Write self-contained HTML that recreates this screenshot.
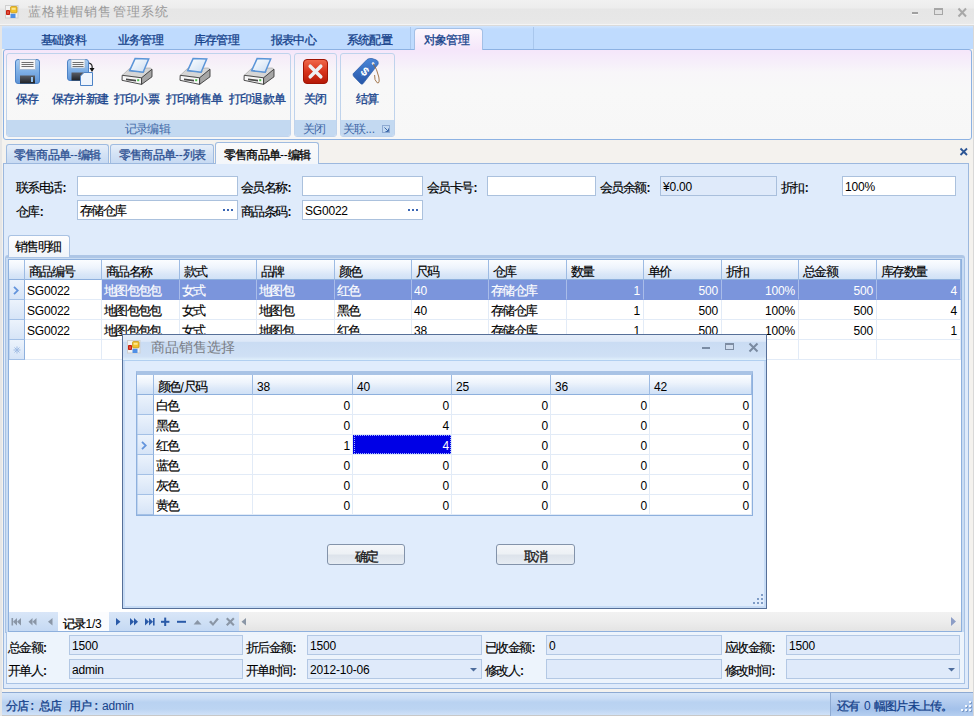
<!DOCTYPE html>
<html><head><meta charset="utf-8">
<style>
*{margin:0;padding:0;box-sizing:border-box}
html,body{width:974px;height:716px;overflow:hidden;background:#f4f2ee}
body{font-family:"Liberation Sans",sans-serif;font-size:13px;letter-spacing:-1.7px;-webkit-text-stroke:0.15px currentColor;color:#000;position:relative}
.a{position:absolute}
.tt{position:absolute;white-space:nowrap;line-height:16px}
.L{font-size:12px;letter-spacing:-0.2px;-webkit-text-stroke:0}
.inp{position:absolute;height:20px;background:#fff;border:1px solid #abc1dd;line-height:16px;padding:2px 0 0 2px;white-space:nowrap}
.ro{background:#dfeafa;border-color:#a9bfdc}
.ro2{background:#dfeafa;border-color:#b3c8e4}
.gh{position:absolute;top:0;height:20px;background:linear-gradient(#fbfdff,#eef4fc 40%,#dae7f8 75%,#d0e1f6);border-right:1px solid #9dbbe3;border-bottom:1px solid #8eb0dd;line-height:16px;padding:4px 0 0 4px;white-space:nowrap}
.gc{position:absolute;height:20px;border-right:1px solid #e2ebf7;border-bottom:1px solid #e2ebf7;line-height:16px;padding:3px 3px 0 2px;white-space:nowrap;overflow:hidden}
.r{text-align:right}
.dr{padding-right:2px}
.rh{position:absolute;height:20px;background:linear-gradient(#ecf3fc,#d6e4f7);border-right:1px solid #8eb0dd;border-bottom:1px solid #a3c0e6;box-shadow:inset 1px 0 0 #c0d5f0}
.sel{background:#7b95dc;color:#fff;border-right-color:#a9bce9;border-bottom-color:#7b95dc}
.fsel{background:#0000e6;color:#fff}
.btn{position:absolute;height:21px;border:1px solid #8393aa;border-radius:3px;background:linear-gradient(#f4f6f9,#edf1f5 45%,#dde3eb 55%,#e6ecf3);text-align:center;line-height:16px;padding-top:3.5px;color:#1b1b1b;-webkit-text-stroke:0.35px #1b1b1b}
.dtab{position:absolute;top:144px;height:20px;border:1px solid #9fbbe0;border-bottom:none;border-radius:3px 3px 0 0;background:linear-gradient(#e6eef9,#d3e2f5 50%,#c6d9f2);color:#2b4f91}
.grp{position:absolute;top:53px;height:84px;border:1px solid #bfd3ec;border-radius:3px;background:linear-gradient(#f5eaf8,#f8f6f9 22%,#f8f8f8 40%,#f7f7f7)}
.glab{position:absolute;left:0;right:0;bottom:0;height:16px;background:#c3d9f1;border-radius:0 0 2px 2px}
</style></head><body>
<div class="a" style="left:0;top:0;width:974px;height:25px;background:linear-gradient(#f1f1f1,#ededed 8px,#e6e6e6 9px,#e7e7e7 20px,#e9e9e9);border-bottom:1px solid #f4f4f4"></div>
<svg class="a" style="left:5px;top:5px" width="14" height="14" viewBox="0 0 14 14">
 <rect x="0.5" y="0.5" width="12.5" height="12.5" fill="#f2f2f2" stroke="#cfcfcf"/>
 <rect x="5.6" y="1.6" width="6.4" height="6.2" rx="0.8" fill="#f3c22a" stroke="#c39312" stroke-width="0.8"/>
 <rect x="6.6" y="2.8" width="4" height="2" fill="#fff0a8" opacity="0.8"/>
 <rect x="1" y="5" width="4" height="5" rx="0.8" fill="#c8200e"/>
 <rect x="2.5" y="6.3" width="1" height="2.5" fill="#ff9a8a" opacity="0.8"/>
 <rect x="5.5" y="8.8" width="5" height="4.2" fill="#4f8fe6"/>
</svg>
<div class="tt" style="left:28px;top:4px;font-size:13px;letter-spacing:1.1px;color:#9a9a9a;-webkit-text-stroke:0">蓝格鞋帽销售管理系统</div>
<div class="a" style="left:912px;top:12px;width:6px;height:2px;background:#a0a0a0;box-shadow:0 1px 0 #f6f6f6"></div>
<div class="a" style="left:934px;top:8px;width:9px;height:7px;border:1px solid #a6a6a6;border-top-width:2px;background:#e2e2e2"></div>
<svg class="a" style="left:957px;top:7px" width="11" height="11"><path d="M1.5 1.5 L9 9.5 M9 1.5 L1.5 9.5" stroke="#a8a8a8" stroke-width="2"/></svg>
<div class="a" style="left:0;top:25px;width:974px;height:24px;background:linear-gradient(#d2e5fd,#bfdbfe 3px);border-top:1px solid #dadada"></div>
<div class="a" style="left:0;top:26px;width:2px;height:690px;background:#e6e6e6"></div>
<div class="a" style="left:973px;top:26px;width:1px;height:690px;background:#d8d8d8"></div>
<div class="tt" style="left:41px;top:32px;color:#15428b;font-size:12px;letter-spacing:-0.8px;-webkit-text-stroke:0.3px currentColor;">基础资料</div>
<div class="tt" style="left:118px;top:32px;color:#15428b;font-size:12px;letter-spacing:-0.8px;-webkit-text-stroke:0.3px currentColor;">业务管理</div>
<div class="tt" style="left:194px;top:32px;color:#15428b;font-size:12px;letter-spacing:-0.8px;-webkit-text-stroke:0.3px currentColor;">库存管理</div>
<div class="tt" style="left:271px;top:32px;color:#15428b;font-size:12px;letter-spacing:-0.8px;-webkit-text-stroke:0.3px currentColor;">报表中心</div>
<div class="tt" style="left:347px;top:32px;color:#15428b;font-size:12px;letter-spacing:-0.8px;-webkit-text-stroke:0.3px currentColor;">系统配置</div>
<div class="a" style="left:410px;top:27px;width:1px;height:22px;background:#a9c7ed"></div>
<div class="a" style="left:533px;top:27px;width:1px;height:22px;background:#a9c7ed"></div>
<div class="a" style="left:3px;top:49px;width:969px;height:91px;border:1px solid #8db2e3;border-radius:3px;background:linear-gradient(#f5e6fa,#f6effa 15%,#f8f6f9 25%,#f8f8f8 45%,#f7f7f7)"></div>
<div class="a" style="left:414px;top:28px;width:69px;height:22px;border:1px solid #a4c0e6;border-bottom:none;border-radius:4px 4px 0 0;background:linear-gradient(#fcf7fd,#f5e6fa)"></div>
<div class="tt" style="left:424px;top:32px;color:#15428b;font-size:12px;letter-spacing:-0.8px;-webkit-text-stroke:0.3px currentColor;">对象管理</div>
<div class="grp" style="left:6px;width:285px"><div class="glab"></div></div>
<div class="tt" style="left:125px;top:121px;color:#3d67a6;font-size:12px;letter-spacing:-0.8px;-webkit-text-stroke:0.3px currentColor;-webkit-text-stroke:0">记录编辑</div>
<div class="grp" style="left:294px;width:43px"><div class="glab"></div></div>
<div class="tt" style="left:303px;top:121px;color:#3d67a6;font-size:12px;letter-spacing:-0.8px;-webkit-text-stroke:0.3px currentColor;-webkit-text-stroke:0">关闭</div>
<div class="grp" style="left:340px;width:55px"><div class="glab"></div></div>
<div class="tt" style="left:343px;top:121px;color:#3d67a6;font-size:12px;letter-spacing:-0.8px;-webkit-text-stroke:0.3px currentColor;-webkit-text-stroke:0">关联<span class="L">...</span></div>
<svg class="a" style="left:382px;top:125px" width="9" height="9"><rect x="0.5" y="0.5" width="7" height="7" fill="none" stroke="#8eaad2"/><path d="M2.5 2.5 L6 6 M6.5 3.5 L6.5 6.5 L3.5 6.5" stroke="#3e6aaa" fill="none"/></svg>
<svg class="a" style="left:0;top:0" width="0" height="0"><defs>
  <linearGradient id="fb" x1="0" y1="0" x2="0" y2="1"><stop offset="0" stop-color="#a9cdf3"/><stop offset="0.5" stop-color="#7fb0e6"/><stop offset="1" stop-color="#5d93d6"/></linearGradient>
  <linearGradient id="fs" x1="0" y1="0" x2="0" y2="1"><stop offset="0" stop-color="#5a5e66"/><stop offset="1" stop-color="#1e2126"/></linearGradient>
  <linearGradient id="pp" x1="0" y1="0" x2="1" y2="1"><stop offset="0" stop-color="#ffffff"/><stop offset="1" stop-color="#c9dcf2"/></linearGradient>
  <linearGradient id="rx" x1="0" y1="0" x2="0" y2="1"><stop offset="0" stop-color="#f06a4c"/><stop offset="0.5" stop-color="#d8341c"/><stop offset="1" stop-color="#b41806"/></linearGradient>
  <linearGradient id="tg" x1="0" y1="0" x2="0" y2="1"><stop offset="0" stop-color="#4a86d8"/><stop offset="1" stop-color="#2656a8"/></linearGradient>
</defs></svg>
<svg class="a" style="left:14px;top:58px" width="28" height="28" viewBox="0 0 28 28">
 <rect x="1.5" y="1.5" width="24" height="24" rx="2.5" fill="url(#fb)" stroke="#4d83c6"/>
 <rect x="5.5" y="1.5" width="16" height="10" fill="#f6f6f6" stroke="#9fb6d2" stroke-width="0.8"/>
 <rect x="7.5" y="4" width="12" height="1" fill="#707070"/><rect x="7.5" y="6" width="12" height="1" fill="#707070"/><rect x="7.5" y="8" width="12" height="1" fill="#707070"/>
 <rect x="6" y="17.5" width="15" height="8" fill="url(#fs)"/>
 <rect x="17" y="19" width="2" height="5" fill="#8ec0f0"/>
</svg>
<svg class="a" style="left:66px;top:58px" width="30" height="30" viewBox="0 0 30 30">
 <rect x="1.5" y="1.5" width="21" height="21" rx="2.5" fill="url(#fb)" stroke="#4d83c6"/>
 <rect x="5" y="1.5" width="14" height="8.5" fill="#f6f6f6" stroke="#9fb6d2" stroke-width="0.8"/>
 <rect x="6.5" y="4" width="11" height="1" fill="#707070"/><rect x="6.5" y="6" width="11" height="1" fill="#707070"/><rect x="6.5" y="8" width="11" height="1" fill="#707070"/>
 <rect x="5.5" y="14.5" width="13" height="8" fill="url(#fs)"/>
 <path d="M18 14.5 L26.5 14.5 L26.5 27.5 L14.5 27.5 L14.5 18Z" fill="#eef4fc" stroke="#4d83c6"/>
 <path d="M23 5 Q27 6 26 11" fill="none" stroke="#222" stroke-width="1.2"/>
 <path d="M23.5 10 L28.5 10 L26 14Z" fill="#111"/>
</svg>
<svg class="a" style="left:120px;top:57px" width="34" height="30" viewBox="0 0 34 30">
 <path d="M2.3 18.3 L9.6 11.4 L30.2 11 L32 12.2 L21.6 20.8Z" fill="#d6d6d6" stroke="#9a9a9a" stroke-width="0.6"/>
 <path d="M2.2 18.3 L21.6 20.8 L21.6 27.4 L2 23.3Z" fill="#f6f6f6" stroke="#3a3a3a" stroke-width="0.9"/>
 <path d="M21.6 20.8 L32 12.2 L32 19.8 L21.6 27.4Z" fill="#a6a6a6" stroke="#3a3a3a" stroke-width="0.9"/>
 <path d="M9 14 L23.5 15.5 L24.5 14 L10 12.6Z" fill="#555"/>
 <path d="M9.6 13.6 L15.1 1.6 L28.7 2 L23.1 15.2Z" fill="url(#pp)" stroke="#5b95d8" stroke-width="1.5"/>
 <path d="M6 21.5 L16 22.8 L16 24.6 L6 23.2Z" fill="#4a4a4a"/>
 <rect x="17.2" y="22.2" width="2" height="2" fill="#52c152"/>
</svg>
<svg class="a" style="left:178px;top:57px" width="34" height="30" viewBox="0 0 34 30">
 <path d="M2.3 18.3 L9.6 11.4 L30.2 11 L32 12.2 L21.6 20.8Z" fill="#d6d6d6" stroke="#9a9a9a" stroke-width="0.6"/>
 <path d="M2.2 18.3 L21.6 20.8 L21.6 27.4 L2 23.3Z" fill="#f6f6f6" stroke="#3a3a3a" stroke-width="0.9"/>
 <path d="M21.6 20.8 L32 12.2 L32 19.8 L21.6 27.4Z" fill="#a6a6a6" stroke="#3a3a3a" stroke-width="0.9"/>
 <path d="M9 14 L23.5 15.5 L24.5 14 L10 12.6Z" fill="#555"/>
 <path d="M9.6 13.6 L15.1 1.6 L28.7 2 L23.1 15.2Z" fill="url(#pp)" stroke="#5b95d8" stroke-width="1.5"/>
 <path d="M6 21.5 L16 22.8 L16 24.6 L6 23.2Z" fill="#4a4a4a"/>
 <rect x="17.2" y="22.2" width="2" height="2" fill="#52c152"/>
</svg>
<svg class="a" style="left:242px;top:57px" width="34" height="30" viewBox="0 0 34 30">
 <path d="M2.3 18.3 L9.6 11.4 L30.2 11 L32 12.2 L21.6 20.8Z" fill="#d6d6d6" stroke="#9a9a9a" stroke-width="0.6"/>
 <path d="M2.2 18.3 L21.6 20.8 L21.6 27.4 L2 23.3Z" fill="#f6f6f6" stroke="#3a3a3a" stroke-width="0.9"/>
 <path d="M21.6 20.8 L32 12.2 L32 19.8 L21.6 27.4Z" fill="#a6a6a6" stroke="#3a3a3a" stroke-width="0.9"/>
 <path d="M9 14 L23.5 15.5 L24.5 14 L10 12.6Z" fill="#555"/>
 <path d="M9.6 13.6 L15.1 1.6 L28.7 2 L23.1 15.2Z" fill="url(#pp)" stroke="#5b95d8" stroke-width="1.5"/>
 <path d="M6 21.5 L16 22.8 L16 24.6 L6 23.2Z" fill="#4a4a4a"/>
 <rect x="17.2" y="22.2" width="2" height="2" fill="#52c152"/>
</svg>
<svg class="a" style="left:302px;top:58px" width="28" height="28" viewBox="0 0 28 28">
 <rect x="1.5" y="1.5" width="24" height="24" rx="3.5" fill="url(#rx)" stroke="#a01404"/>
 <path d="M8.2 8.2 L18.8 18.8 M18.8 8.2 L8.2 18.8" stroke="#eef1f4" stroke-width="3.5" stroke-linecap="round"/>
</svg>
<svg class="a" style="left:350px;top:56px" width="34" height="32" viewBox="0 0 34 32">
 <path d="M3.3 17.6 L17.1 3.5 Q19 2 22 2.5 L26.5 4 Q28.8 5.5 28.2 8 L13.1 27.6 Q12 28.8 10.5 27.5 L3.8 20.5 Q2.5 19 3.3 17.6Z" fill="url(#tg)" stroke="#2a5aa6" stroke-width="0.7"/>
 <circle cx="23.1" cy="7.5" r="1.3" fill="#fff"/>
 <text x="11.6" y="20" font-size="12" font-family="Liberation Sans" font-weight="bold" fill="#fff" transform="rotate(40 15.6 15.6)">$</text>
 <path d="M23.1 7.5 Q27 13 28.8 21 Q30 28 27.2 26.8 Q24.2 24.5 24.6 19" fill="none" stroke="#9a6a3a" stroke-width="0.9"/>
</svg>
<div class="tt" style="left:16px;top:91px;color:#15428b;font-size:12px;letter-spacing:-0.8px;-webkit-text-stroke:0.3px currentColor;">保存</div>
<div class="tt" style="left:52px;top:91px;color:#15428b;font-size:12px;letter-spacing:-0.8px;-webkit-text-stroke:0.3px currentColor;">保存并新建</div>
<div class="tt" style="left:114px;top:91px;color:#15428b;font-size:12px;letter-spacing:-0.8px;-webkit-text-stroke:0.3px currentColor;">打印小票</div>
<div class="tt" style="left:166px;top:91px;color:#15428b;font-size:12px;letter-spacing:-0.8px;-webkit-text-stroke:0.3px currentColor;">打印销售单</div>
<div class="tt" style="left:229px;top:91px;color:#15428b;font-size:12px;letter-spacing:-0.8px;-webkit-text-stroke:0.3px currentColor;">打印退款单</div>
<div class="tt" style="left:304px;top:91px;color:#15428b;font-size:12px;letter-spacing:-0.8px;-webkit-text-stroke:0.3px currentColor;">关闭</div>
<div class="tt" style="left:356px;top:91px;color:#15428b;font-size:12px;letter-spacing:-0.8px;-webkit-text-stroke:0.3px currentColor;">结算</div>
<div class="dtab" style="left:6px;width:103px"></div>
<div class="dtab" style="left:110px;width:104px"></div>
<div class="tt" style="left:14px;top:147px;color:#2b4f91;font-size:12px;letter-spacing:-0.8px;-webkit-text-stroke:0.3px currentColor;">零售商品单<span class="L">--</span>编辑</div>
<div class="tt" style="left:119px;top:147px;color:#2b4f91;font-size:12px;letter-spacing:-0.8px;-webkit-text-stroke:0.3px currentColor;">零售商品单<span class="L">--</span>列表</div>
<svg class="a" style="left:959px;top:147px" width="10" height="10"><path d="M1.5 1.5 L8 8 M8 1.5 L1.5 8" stroke="#2c5595" stroke-width="1.8"/></svg>
<div class="a" style="left:3px;top:163px;width:966px;height:526px;background:#dfebfb;border:1px solid #9cb8de"></div>
<div class="a" style="left:215px;top:142px;width:104px;height:22px;border:1px solid #9fbbe0;border-bottom:none;border-radius:3px 3px 0 0;background:linear-gradient(#fafafa,#f3f6fa);"></div>
<div class="tt" style="left:224px;top:147px;font-size:12px;letter-spacing:-0.8px;-webkit-text-stroke:0.3px currentColor;">零售商品单<span class="L">--</span>编辑</div>
<div class="tt" style="left:16px;top:180px;">联系电话<span class="L" style="margin-left:1.2px;font-weight:bold">:</span></div>
<div class="tt" style="left:241px;top:180px;">会员名称<span class="L" style="margin-left:1.2px;font-weight:bold">:</span></div>
<div class="tt" style="left:427px;top:180px;">会员卡号<span class="L" style="margin-left:1.2px;font-weight:bold">:</span></div>
<div class="tt" style="left:600px;top:180px;">会员余额<span class="L" style="margin-left:1.2px;font-weight:bold">:</span></div>
<div class="tt" style="left:781px;top:180px;">折扣<span class="L" style="margin-left:1.2px;font-weight:bold">:</span></div>
<div class="tt" style="left:16px;top:204px;">仓库<span class="L" style="margin-left:1.2px;font-weight:bold">:</span></div>
<div class="tt" style="left:241px;top:204px;">商品条码<span class="L" style="margin-left:1.2px;font-weight:bold">:</span></div>
<div class="inp" style="left:77px;top:176px;width:161px"></div>
<div class="inp" style="left:302px;top:176px;width:121px"></div>
<div class="inp" style="left:487px;top:176px;width:109px"></div>
<div class="inp ro" style="left:660px;top:176px;width:117px"><span class="L">¥0.00</span></div>
<div class="inp" style="left:842px;top:176px;width:114px"><span class="L">100%</span></div>
<div class="inp" style="left:77px;top:200px;width:161px">存储仓库<svg class="a" style="right:3px;top:8px" width="11" height="3"><rect x="0" y="0" width="2" height="2" fill="#3a66b4"/><rect x="4" y="0" width="2" height="2" fill="#3a66b4"/><rect x="8" y="0" width="2" height="2" fill="#3a66b4"/></svg></div>
<div class="inp" style="left:302px;top:200px;width:121px"><span class="L">SG0022</span><svg class="a" style="right:3px;top:8px" width="11" height="3"><rect x="0" y="0" width="2" height="2" fill="#3a66b4"/><rect x="4" y="0" width="2" height="2" fill="#3a66b4"/><rect x="8" y="0" width="2" height="2" fill="#3a66b4"/></svg></div>
<div class="a" style="left:5px;top:255px;width:960px;height:378px;background:#c9dcf3;border:1px solid #a9c3e5;border-top:3px solid #aec6e6;border-radius:3px 3px 0 0"></div>
<div class="a" style="left:8px;top:235px;width:62px;height:22px;border:1px solid #a9c2e3;border-bottom:none;border-radius:3px 3px 0 0;background:linear-gradient(#fdfdfe,#f0f4fa)"></div>
<div class="tt" style="left:15px;top:239px;">销售明细</div>
<div class="a" style="left:8px;top:259px;width:954px;height:354px;background:#fff;border:1px solid #8eb0dd"></div>
<div class="a" style="left:9px;top:260px;width:952px;height:352px;overflow:hidden"><div class="gh" style="left:0;width:16px;padding:0"></div><div class="gh" style="left:16px;width:77px">商品编号</div><div class="gh" style="left:93px;width:78px">商品名称</div><div class="gh" style="left:171px;width:77px">款式</div><div class="gh" style="left:248px;width:78px">品牌</div><div class="gh" style="left:326px;width:77px">颜色</div><div class="gh" style="left:403px;width:77px">尺码</div><div class="gh" style="left:480px;width:78px">仓库</div><div class="gh" style="left:558px;width:77px">数量</div><div class="gh" style="left:635px;width:78px">单价</div><div class="gh" style="left:713px;width:77px">折扣</div><div class="gh" style="left:790px;width:78px">总金额</div><div class="gh" style="left:868px;width:84px">库存数量</div><div class="rh" style="left:0;top:20px;width:16px"><svg class="a" style="left:4px;top:6px" width="6" height="9"><path d="M1 0.8 L4.8 4.5 L1 8.2" fill="none" stroke="#6394dc" stroke-width="1.8"/></svg></div><div class="gc" style="left:16px;top:20px;width:77px"><span class="L">SG0022</span></div><div class="gc sel" style="left:93px;top:20px;width:78px">地图包包包</div><div class="gc sel" style="left:171px;top:20px;width:77px">女式</div><div class="gc sel" style="left:248px;top:20px;width:78px">地图包</div><div class="gc sel" style="left:326px;top:20px;width:77px">红色</div><div class="gc sel" style="left:403px;top:20px;width:77px"><span class="L">40</span></div><div class="gc sel" style="left:480px;top:20px;width:78px">存储仓库</div><div class="gc r sel" style="left:558px;top:20px;width:77px"><span class="L">1</span></div><div class="gc r sel" style="left:635px;top:20px;width:78px"><span class="L">500</span></div><div class="gc r sel" style="left:713px;top:20px;width:77px"><span class="L">100%</span></div><div class="gc r sel" style="left:790px;top:20px;width:78px"><span class="L">500</span></div><div class="gc r sel" style="left:868px;top:20px;width:84px"><span class="L">4</span></div><div class="rh" style="left:0;top:40px;width:16px"></div><div class="gc" style="left:16px;top:40px;width:77px"><span class="L">SG0022</span></div><div class="gc" style="left:93px;top:40px;width:78px">地图包包包</div><div class="gc" style="left:171px;top:40px;width:77px">女式</div><div class="gc" style="left:248px;top:40px;width:78px">地图包</div><div class="gc" style="left:326px;top:40px;width:77px">黑色</div><div class="gc" style="left:403px;top:40px;width:77px"><span class="L">40</span></div><div class="gc" style="left:480px;top:40px;width:78px">存储仓库</div><div class="gc r" style="left:558px;top:40px;width:77px"><span class="L">1</span></div><div class="gc r" style="left:635px;top:40px;width:78px"><span class="L">500</span></div><div class="gc r" style="left:713px;top:40px;width:77px"><span class="L">100%</span></div><div class="gc r" style="left:790px;top:40px;width:78px"><span class="L">500</span></div><div class="gc r" style="left:868px;top:40px;width:84px"><span class="L">4</span></div><div class="rh" style="left:0;top:60px;width:16px"></div><div class="gc" style="left:16px;top:60px;width:77px"><span class="L">SG0022</span></div><div class="gc" style="left:93px;top:60px;width:78px">地图包包包</div><div class="gc" style="left:171px;top:60px;width:77px">女式</div><div class="gc" style="left:248px;top:60px;width:78px">地图包</div><div class="gc" style="left:326px;top:60px;width:77px">红色</div><div class="gc" style="left:403px;top:60px;width:77px"><span class="L">38</span></div><div class="gc" style="left:480px;top:60px;width:78px">存储仓库</div><div class="gc r" style="left:558px;top:60px;width:77px"><span class="L">1</span></div><div class="gc r" style="left:635px;top:60px;width:78px"><span class="L">500</span></div><div class="gc r" style="left:713px;top:60px;width:77px"><span class="L">100%</span></div><div class="gc r" style="left:790px;top:60px;width:78px"><span class="L">500</span></div><div class="gc r" style="left:868px;top:60px;width:84px"><span class="L">1</span></div><div class="rh" style="left:0;top:80px;width:16px"><svg class="a" style="left:4px;top:6px" width="8" height="8"><path d="M4 0.5 V7.5 M0.5 4 H7.5 M1.5 1.5 L6.5 6.5 M6.5 1.5 L1.5 6.5" stroke="#9fbbe3" stroke-width="1"/></svg></div><div class="gc" style="left:16px;top:80px;width:77px"></div><div class="gc" style="left:93px;top:80px;width:78px"></div><div class="gc" style="left:171px;top:80px;width:77px"></div><div class="gc" style="left:248px;top:80px;width:78px"></div><div class="gc" style="left:326px;top:80px;width:77px"></div><div class="gc" style="left:403px;top:80px;width:77px"></div><div class="gc" style="left:480px;top:80px;width:78px"></div><div class="gc r" style="left:558px;top:80px;width:77px"></div><div class="gc r" style="left:635px;top:80px;width:78px"></div><div class="gc r" style="left:713px;top:80px;width:77px"></div><div class="gc r" style="left:790px;top:80px;width:78px"></div><div class="gc r" style="left:868px;top:80px;width:84px"></div></div>
<div class="a" style="left:8px;top:612px;width:954px;height:20px;background:linear-gradient(#d9e6f8,#cfe0f5 50%,#c5d9f3);border:1px solid #8eb0dd;border-top:none"></div>
<div class="a" style="left:58px;top:612px;width:51px;height:19px;background:#fbfcfe"></div>
<div class="tt" style="left:63px;top:616px;font-size:12px;letter-spacing:-0.8px;-webkit-text-stroke:0.3px currentColor;">记录<span class="L">1/3</span></div>
<div class="a" style="left:239px;top:612px;width:722px;height:19px;background:linear-gradient(#f2f2f2,#ededed 50%,#e4e4e4)"></div>
<svg class="a" style="left:8px;top:612px" width="240" height="20" viewBox="0 0 240 20">
<g fill="#8a96a6">
 <rect x="3.5" y="6" width="1.6" height="7.5"/><path d="M9 6 L5 9.75 L9 13.5Z"/><path d="M13 6 L9 9.75 L13 13.5Z"/>
 <path d="M24.5 6 L20.5 9.75 L24.5 13.5Z"/><path d="M28.5 6 L24.5 9.75 L28.5 13.5Z"/>
 <path d="M44.5 6 L40 9.75 L44.5 13.5Z"/>
</g>
<g fill="#2a5aa8">
 <path d="M108 6 L112.5 9.75 L108 13.5Z"/>
 <path d="M122 6 L126 9.75 L122 13.5Z"/><path d="M126 6 L130 9.75 L126 13.5Z"/>
 <path d="M137 6 L141 9.75 L137 13.5Z"/><path d="M141 6 L145 9.75 L141 13.5Z"/><rect x="145" y="6" width="1.6" height="7.5"/>
 <rect x="153" y="8.8" width="8.4" height="2"/><rect x="156.2" y="5.6" width="2" height="8.4"/>
 <rect x="169" y="8.8" width="9" height="2"/>
</g>
<g fill="#8a96a6">
 <path d="M185.6 12.5 L189.5 8 L193.5 12.5Z"/>
 <path d="M201 10 L203 8.5 L205 11 L209 5.8 L210.8 7.2 L205 14Z"/>
 <path d="M218 7 L219.5 5.5 L222.3 8.3 L225.1 5.5 L226.6 7 L223.8 9.8 L226.6 12.6 L225.1 14.1 L222.3 11.3 L219.5 14.1 L218 12.6 L220.8 9.8Z"/>
 <path d="M238 6 L233.5 9.75 L238 13.5Z"/>
</g>
</svg>
<svg class="a" style="left:947px;top:612px" width="14" height="20"><path d="M4 5 L9 9.5 L4 14Z" fill="#8c9dc6"/></svg>
<div class="a" style="left:6px;top:632px;width:959px;height:52px;background:#edf4fc;border:1px solid #a9c3e5;border-top:none"></div>
<div class="tt" style="left:8px;top:640px;">总金额<span class="L" style="margin-left:1.2px;font-weight:bold">:</span></div>
<div class="tt" style="left:246px;top:640px;">折后金额<span class="L" style="margin-left:1.2px;font-weight:bold">:</span></div>
<div class="tt" style="left:485px;top:640px;">已收金额<span class="L" style="margin-left:1.2px;font-weight:bold">:</span></div>
<div class="tt" style="left:725px;top:640px;">应收金额<span class="L" style="margin-left:1.2px;font-weight:bold">:</span></div>
<div class="tt" style="left:8px;top:663px;">开单人<span class="L" style="margin-left:1.2px;font-weight:bold">:</span></div>
<div class="tt" style="left:246px;top:663px;">开单时间<span class="L" style="margin-left:1.2px;font-weight:bold">:</span></div>
<div class="tt" style="left:485px;top:663px;">修改人<span class="L" style="margin-left:1.2px;font-weight:bold">:</span></div>
<div class="tt" style="left:725px;top:663px;">修改时间<span class="L" style="margin-left:1.2px;font-weight:bold">:</span></div>
<div class="inp ro2" style="left:69px;top:635px;width:174px"><span class="L">1500</span></div>
<div class="inp ro2" style="left:307px;top:635px;width:175px"><span class="L">1500</span></div>
<div class="inp ro2" style="left:546px;top:635px;width:176px"><span class="L">0</span></div>
<div class="inp ro2" style="left:786px;top:635px;width:174px"><span class="L">1500</span></div>
<div class="inp ro2" style="left:69px;top:659px;width:174px"><span class="L">admin</span></div>
<div class="inp ro2" style="left:307px;top:659px;width:175px"><span class="L">2012-10-06</span><svg class="a" style="right:4px;top:8px" width="7" height="4"><path d="M0 0 L7 0 L3.5 3.5Z" fill="#4d6c9c"/></svg></div>
<div class="inp ro2" style="left:546px;top:659px;width:176px"></div>
<div class="inp ro2" style="left:786px;top:659px;width:174px"><svg class="a" style="right:4px;top:8px" width="7" height="4"><path d="M0 0 L7 0 L3.5 3.5Z" fill="#4d6c9c"/></svg></div>
<div class="a" style="left:2px;top:692px;width:971px;height:24px;background:linear-gradient(#d6e6f9,#c9dcf5 25%,#b9d2f1 40%,#bcd4f2 70%,#cfe1f8 95%,#c8c8c8 96%);border-top:1px solid #8eaad2"></div>
<div class="tt" style="left:6px;top:698px;color:#15428b;font-size:12px;letter-spacing:-0.8px;-webkit-text-stroke:0.3px currentColor;">分店</div>
<div class="tt" style="left:29px;top:698px;color:#15428b;font-size:12px;letter-spacing:-0.8px;-webkit-text-stroke:0.3px currentColor;"><span class="L" style="margin-left:1.2px;font-weight:bold">:</span></div>
<div class="tt" style="left:39px;top:698px;color:#15428b;font-size:12px;letter-spacing:-0.8px;-webkit-text-stroke:0.3px currentColor;">总店</div>
<div class="tt" style="left:69px;top:698px;color:#15428b;font-size:12px;letter-spacing:-0.8px;-webkit-text-stroke:0.3px currentColor;">用户</div>
<div class="tt" style="left:93px;top:698px;color:#15428b;font-size:12px;letter-spacing:-0.8px;-webkit-text-stroke:0.3px currentColor;"><span class="L" style="margin-left:1.2px;font-weight:bold">:</span></div>
<div class="tt" style="left:102px;top:698px;color:#15428b;font-size:12px;letter-spacing:-0.8px;-webkit-text-stroke:0.3px currentColor;"><span class="L">admin</span></div>
<div class="a" style="left:830px;top:693px;width:143px;height:23px;background:linear-gradient(#c4d9f4,#b2cbee 40%,#a3c1ea 70%,#b6cff0);border-left:1px solid #8eaad2"></div>
<div class="tt" style="left:837px;top:698px;color:#15428b;font-size:12px;letter-spacing:-0.8px;-webkit-text-stroke:0.3px currentColor;">还有</div>
<div class="tt" style="left:864px;top:698px;color:#15428b;font-size:12px;letter-spacing:-0.8px;-webkit-text-stroke:0.3px currentColor;"><span class="L">0</span></div>
<div class="tt" style="left:874px;top:698px;color:#15428b;font-size:12px;letter-spacing:-0.8px;-webkit-text-stroke:0.3px currentColor;">幅图片未上传。</div>
<div class="a" style="left:969px;top:701px;width:2px;height:2px;background:#f4f8fd;box-shadow:1px 1px 0 #7f9dc8"></div>
<div class="a" style="left:965px;top:705px;width:2px;height:2px;background:#f4f8fd;box-shadow:1px 1px 0 #7f9dc8"></div>
<div class="a" style="left:969px;top:705px;width:2px;height:2px;background:#f4f8fd;box-shadow:1px 1px 0 #7f9dc8"></div>
<div class="a" style="left:961px;top:709px;width:2px;height:2px;background:#f4f8fd;box-shadow:1px 1px 0 #7f9dc8"></div>
<div class="a" style="left:965px;top:709px;width:2px;height:2px;background:#f4f8fd;box-shadow:1px 1px 0 #7f9dc8"></div>
<div class="a" style="left:969px;top:709px;width:2px;height:2px;background:#f4f8fd;box-shadow:1px 1px 0 #7f9dc8"></div>
<div class="a" style="left:122px;top:334px;width:645px;height:275px;background:#e0ecfc;border:1px solid #566f98;box-shadow:inset 0 0 0 2px #c6dbf5"></div>
<div class="a" style="left:123px;top:335px;width:643px;height:26px;background:linear-gradient(#e4edf9,#dde8f8 25%,#cadcf3 30%,#cfe0f5 85%,#e0f0fc);border-bottom:1px solid #b1cff0"></div>
<svg class="a" style="left:127px;top:340px" width="14" height="14" viewBox="0 0 14 14">
 <rect x="0.5" y="0.5" width="12.5" height="12.5" fill="#f2f2f2" stroke="#cfcfcf"/>
 <rect x="5.6" y="1.6" width="6.4" height="6.2" rx="0.8" fill="#f3c22a" stroke="#c39312" stroke-width="0.8"/>
 <rect x="6.6" y="2.8" width="4" height="2" fill="#fff0a8" opacity="0.8"/>
 <rect x="1" y="5" width="4" height="5" rx="0.8" fill="#c8200e"/>
 <rect x="2.5" y="6.3" width="1" height="2.5" fill="#ff9a8a" opacity="0.8"/>
 <rect x="5.5" y="8.8" width="5" height="4.2" fill="#4f8fe6"/>
</svg>
<div class="tt" style="left:151px;top:339px;font-size:14px;letter-spacing:0;color:#7a7e86;-webkit-text-stroke:0">商品销售选择</div>
<div class="a" style="left:702px;top:347px;width:8px;height:2px;background:#7a8ca4"></div>
<div class="a" style="left:725px;top:343px;width:9px;height:7px;border:1px solid #7d8ca2;border-top-width:2px;background:#cfdcee"></div>
<svg class="a" style="left:748px;top:342px" width="11" height="11"><path d="M1.5 1.5 L9.5 9.5 M9.5 1.5 L1.5 9.5" stroke="#7a8aa0" stroke-width="2"/></svg>
<div class="a" style="left:136px;top:371px;width:617px;height:145px;background:#fff;border:1px solid #8eb0dd;border-top:4px solid #a9c3e5"></div>
<div class="a" style="left:137px;top:375px;width:615px;height:140px;overflow:hidden"><div class="gh" style="left:0;top:0;width:17px;padding:0"></div><div class="gh" style="left:17px;top:0;width:99px">颜色<span class="L">/</span>尺码</div><div class="gh" style="left:116px;top:0;width:100px"><span class="L">38</span></div><div class="gh" style="left:216px;top:0;width:99px"><span class="L">40</span></div><div class="gh" style="left:315px;top:0;width:99px"><span class="L">25</span></div><div class="gh" style="left:414px;top:0;width:99px"><span class="L">36</span></div><div class="gh" style="left:513px;top:0;width:102px"><span class="L">42</span></div><div class="rh" style="left:0;top:20px;width:17px"></div><div class="gc" style="left:17px;top:20px;width:99px">白色</div><div class="gc r dr" style="left:116px;top:20px;width:100px"><span class="L">0</span></div><div class="gc r dr" style="left:216px;top:20px;width:99px"><span class="L">0</span></div><div class="gc r dr" style="left:315px;top:20px;width:99px"><span class="L">0</span></div><div class="gc r dr" style="left:414px;top:20px;width:99px"><span class="L">0</span></div><div class="gc r dr" style="left:513px;top:20px;width:102px"><span class="L">0</span></div><div class="rh" style="left:0;top:40px;width:17px"></div><div class="gc" style="left:17px;top:40px;width:99px">黑色</div><div class="gc r dr" style="left:116px;top:40px;width:100px"><span class="L">0</span></div><div class="gc r dr" style="left:216px;top:40px;width:99px"><span class="L">4</span></div><div class="gc r dr" style="left:315px;top:40px;width:99px"><span class="L">0</span></div><div class="gc r dr" style="left:414px;top:40px;width:99px"><span class="L">0</span></div><div class="gc r dr" style="left:513px;top:40px;width:102px"><span class="L">0</span></div><div class="rh" style="left:0;top:60px;width:17px"><svg class="a" style="left:4px;top:6px" width="6" height="9"><path d="M1 0.8 L4.8 4.5 L1 8.2" fill="none" stroke="#6394dc" stroke-width="1.8"/></svg></div><div class="gc" style="left:17px;top:60px;width:99px">红色</div><div class="gc r dr" style="left:116px;top:60px;width:100px"><span class="L">1</span></div><div class="gc r dr fsel" style="left:216px;top:60px;width:99px"><span class="L">4</span></div><div class="gc r dr" style="left:315px;top:60px;width:99px"><span class="L">0</span></div><div class="gc r dr" style="left:414px;top:60px;width:99px"><span class="L">0</span></div><div class="gc r dr" style="left:513px;top:60px;width:102px"><span class="L">0</span></div><div class="rh" style="left:0;top:80px;width:17px"></div><div class="gc" style="left:17px;top:80px;width:99px">蓝色</div><div class="gc r dr" style="left:116px;top:80px;width:100px"><span class="L">0</span></div><div class="gc r dr" style="left:216px;top:80px;width:99px"><span class="L">0</span></div><div class="gc r dr" style="left:315px;top:80px;width:99px"><span class="L">0</span></div><div class="gc r dr" style="left:414px;top:80px;width:99px"><span class="L">0</span></div><div class="gc r dr" style="left:513px;top:80px;width:102px"><span class="L">0</span></div><div class="rh" style="left:0;top:100px;width:17px"></div><div class="gc" style="left:17px;top:100px;width:99px">灰色</div><div class="gc r dr" style="left:116px;top:100px;width:100px"><span class="L">0</span></div><div class="gc r dr" style="left:216px;top:100px;width:99px"><span class="L">0</span></div><div class="gc r dr" style="left:315px;top:100px;width:99px"><span class="L">0</span></div><div class="gc r dr" style="left:414px;top:100px;width:99px"><span class="L">0</span></div><div class="gc r dr" style="left:513px;top:100px;width:102px"><span class="L">0</span></div><div class="rh" style="left:0;top:120px;width:17px"></div><div class="gc" style="left:17px;top:120px;width:99px">黄色</div><div class="gc r dr" style="left:116px;top:120px;width:100px"><span class="L">0</span></div><div class="gc r dr" style="left:216px;top:120px;width:99px"><span class="L">0</span></div><div class="gc r dr" style="left:315px;top:120px;width:99px"><span class="L">0</span></div><div class="gc r dr" style="left:414px;top:120px;width:99px"><span class="L">0</span></div><div class="gc r dr" style="left:513px;top:120px;width:102px"><span class="L">0</span></div></div>
<div class="a" style="left:354px;top:435px;width:97px;height:19px;border:1px dotted #9fb4ff"></div>
<div class="btn" style="left:327px;top:544px;width:78px">确定</div>
<div class="btn" style="left:496px;top:544px;width:79px">取消</div>
<div class="a" style="left:761px;top:594px;width:2px;height:2px;background:#7f9cc6"></div>
<div class="a" style="left:757px;top:598px;width:2px;height:2px;background:#7f9cc6"></div>
<div class="a" style="left:761px;top:598px;width:2px;height:2px;background:#7f9cc6"></div>
<div class="a" style="left:753px;top:602px;width:2px;height:2px;background:#7f9cc6"></div>
<div class="a" style="left:757px;top:602px;width:2px;height:2px;background:#7f9cc6"></div>
<div class="a" style="left:761px;top:602px;width:2px;height:2px;background:#7f9cc6"></div>
</body></html>
